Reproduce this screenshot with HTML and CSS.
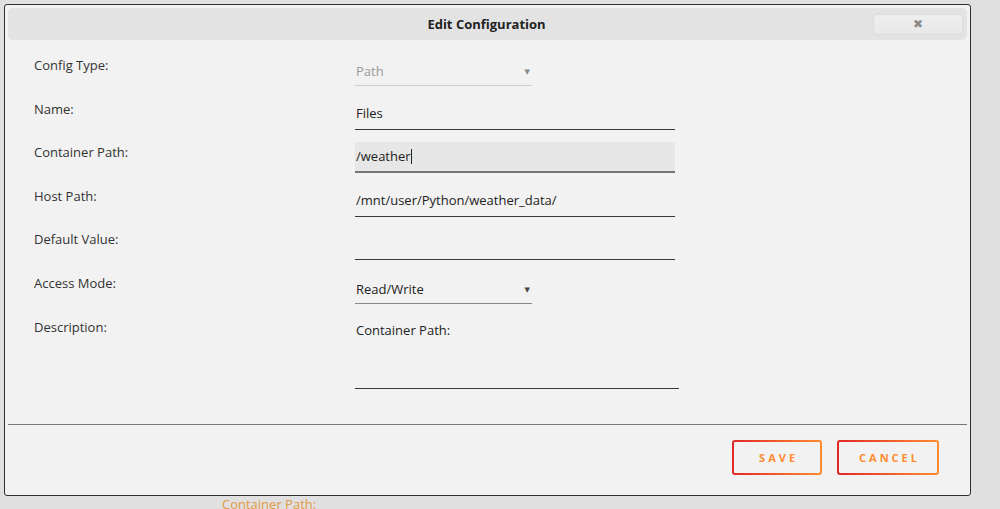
FILE: index.html
```html
<!DOCTYPE html>
<html lang="en">
<head>
    <meta charset="UTF-8">
    <title>Edit Configuration</title>
    <link rel="stylesheet" href="styles.css">
</head>
<body>
    <div class="page">
        <div class="page-label">Container Path:</div>
    </div>

    <div class="dialog">
        <div class="dialog-title">
            <span class="title-text">Edit Configuration</span>
            <button class="close-button" title="Close">&#10006;</button>
        </div>

        <div class="form">
            <div class="form-row">
                <label class="form-label">Config Type:</label>
                <div class="select disabled">
                    <span>Path</span>
                    <span class="arrow">&#9660;</span>
                </div>
            </div>
            <div class="form-row">
                <label class="form-label">Name:</label>
                <div class="field">Files</div>
            </div>
            <div class="form-row">
                <label class="form-label">Container Path:</label>
                <div class="field focused">/weather<span class="caret"></span></div>
            </div>
            <div class="form-row">
                <label class="form-label">Host Path:</label>
                <div class="field">/mnt/user/Python/weather_data/</div>
            </div>
            <div class="form-row">
                <label class="form-label">Default Value:</label>
                <div class="field"></div>
            </div>
            <div class="form-row">
                <label class="form-label">Access Mode:</label>
                <div class="select">
                    <span>Read/Write</span>
                    <span class="arrow">&#9660;</span>
                </div>
            </div>
            <div class="form-row description">
                <label class="form-label">Description:</label>
                <div class="textarea">Container Path:</div>
            </div>
        </div>

        <div class="dialog-footer">
            <button class="outline-button">SAVE</button>
            <button class="outline-button">CANCEL</button>
        </div>
    </div>
</body>
</html>
```

FILE: styles.css
```css
:root {
    --page: #e0e0e0;
    --dialog: #f2f2f2;
    --title-bar: #e3e3e3;
    --text: #333333;
    --text-muted: #999999;
    --line: #3a3a3a;
    --orange: #ff8c2f;
    --red: #e22828;
}

* {
    box-sizing: border-box;
    margin: 0;
    padding: 0;
}

body {
    font-family: 'Open Sans', 'DejaVu Sans', sans-serif;
    font-size: 13px;
    color: var(--text);
    background-color: var(--page);
    height: 509px;
    overflow: hidden;
}

.page {
    padding: 495px 0 0 222px;
}

.page-label {
    color: #e39a45;
    font-size: 13px;
    line-height: 18px;
}

/* modal window */
.dialog {
    position: absolute;
    top: 4px;
    left: 4px;
    width: 967px;
    height: 492px;
    background-color: var(--dialog);
    border: 1px solid #2e2e2e;
    border-radius: 3px;
    padding: 3px;
    display: flex;
    flex-direction: column;
}

.dialog-title {
    height: 32px;
    background-color: var(--title-bar);
    border-radius: 5px;
    display: flex;
    align-items: center;
    justify-content: center;
    position: relative;
}

.title-text {
    font-weight: 700;
    font-size: 13px;
    color: #222;
    margin-left: -2px;
}

.close-button {
    position: absolute;
    right: 4px;
    top: 6px;
    width: 90px;
    height: 21px;
    border: 1px solid #dcdcdc;
    border-radius: 4px;
    background: linear-gradient(#efefef, #e8e8e8);
    color: #8a8a8a;
    font-size: 12px;
    line-height: 19px;
    cursor: pointer;
}

.form {
    padding: 16px 0 0 26px;
    display: grid;
    grid-template-columns: 321px 1fr;
    grid-auto-rows: 43.6px;
}

.form-row {
    display: contents;
}

.form-label {
    line-height: 18px;
    color: var(--text);
}

.field {
    width: 320px;
    height: 31px;
    line-height: 28px;
    border-bottom: 1px solid var(--line);
    padding: 0 0 0 1px;
    margin-top: -1px;
    color: #222;
}

.field.focused {
    background-color: #e7e7e7;
    border-bottom: 2px solid #777;
}

.caret {
    display: inline-block;
    width: 1px;
    height: 15px;
    background-color: #222;
    vertical-align: -3px;
}

.select {
    width: 177px;
    height: 31px;
    line-height: 28px;
    border-bottom: 1px solid #888;
    padding: 2px 0 0 1px;
    margin-top: -1px;
    display: flex;
    justify-content: space-between;
    color: #222;
}

.select.disabled {
    color: var(--text-muted);
    border-bottom-color: #cfcfcf;
}

.arrow {
    font-size: 7px;
    color: #444;
    padding-right: 2px;
    padding-top: 1px;
}

.select.disabled .arrow {
    color: #888;
}

.description .form-label {
    grid-row: span 2;
}

.textarea {
    grid-row: span 2;
    width: 324px;
    height: 72px;
    padding: 4px 0 0 1px;
    margin-top: -1px;
    line-height: 18px;
    border-bottom: 1px solid var(--line);
    color: #222;
}

.dialog-footer {
    margin-top: auto;
    border-top: 1px solid #777;
    height: 68px;
    display: flex;
    justify-content: flex-end;
    align-items: flex-start;
    gap: 15px;
    padding: 15px 28px 0 0;
}

.outline-button {
    height: 35px;
    min-width: 90px;
    padding: 0 17px 0 20px;
    border: 2px solid transparent;
    border-radius: 3px;
    background:
        linear-gradient(var(--dialog), var(--dialog)) padding-box,
        linear-gradient(to right, var(--red), var(--orange)) border-box;
    color: var(--orange);
    font-family: 'Open Sans', sans-serif;
    font-size: 11px;
    font-weight: 700;
    letter-spacing: 3px;
    cursor: pointer;
}
```
